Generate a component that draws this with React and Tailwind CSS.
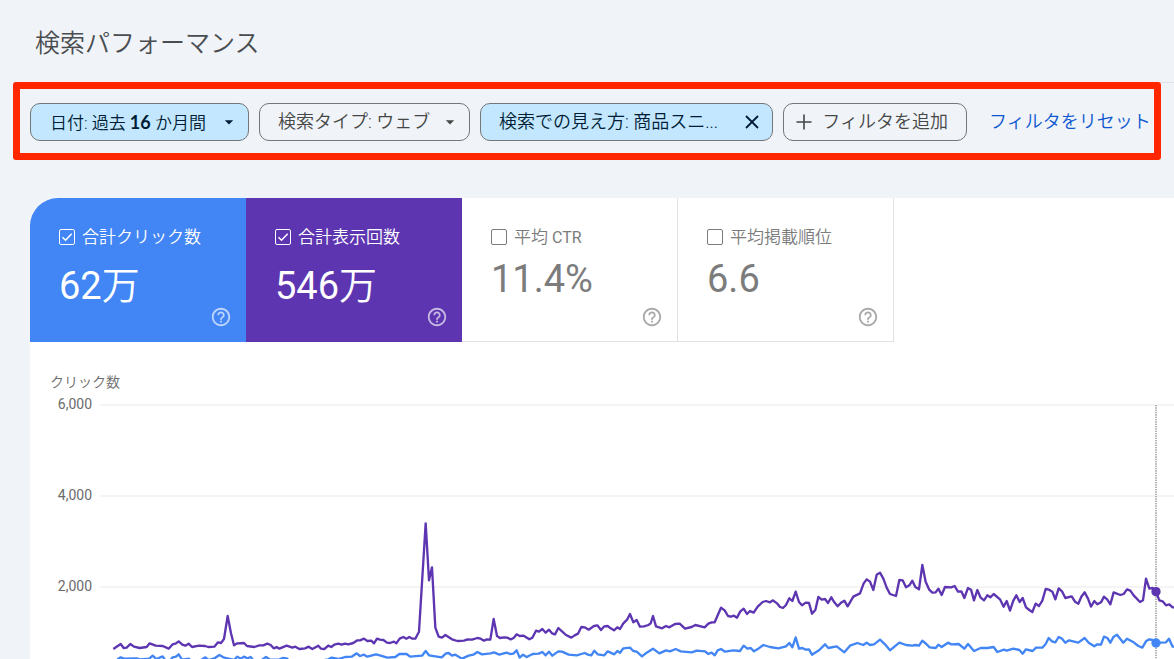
import { MdArrowDropDown, MdHelpOutline } from "react-icons/md";

const METRICS = [
  { id: "clicks", label: "合計クリック数", value: "62万", checked: true, tone: "bg-[#4285f4] text-white rounded-tl-[28px]" },
  { id: "impressions", label: "合計表示回数", value: "546万", checked: true, tone: "bg-[#5e35b1] text-white" },
  { id: "ctr", label: "平均", suffix: "CTR", value: "11.4%", checked: false, tone: "bg-white text-[#7c7c7c] border-r border-b border-[#e2e2e4]" },
  { id: "position", label: "平均掲載順位", value: "6.6", checked: false, tone: "bg-white text-[#7c7c7c] border-r border-b border-[#e2e2e4]" },
];

// Each series is stored in four spans; a span has its start on the time axis and its points.
const IMPRESSIONS = [
  [0, "40,447 62,432 71,444 80,443 91,432 102,440 119,444 140,441 149,430 167,437 188,438 206,446 218,433 228,430 236,424 247,434 256,437 266,431 276,441 297,437 315,438 325,441 343,440 354,427 363,429 372,417 383,348 393,400 402,436 412,430 432,429 441,438 463,441 478,436 490,436 502,431 512,435 521,445 530,441 538,446 560,437 577,443 586,440 598,447 615,445 626,440 637,447 655,437 663,446 673,447 685,437 694,441 703,434 715,431 725,434 735,431 745,433 760,429 772,421"],
  [780, "0,421 12,416 22,423 34,422 42,430 51,416 60,419 70,420 81,428 90,429 102,425 109,430 119,416 130,411 139,416 148,411 157,416 166,416 177,395 197,70 207,241 216,202 226,383 236,410 246,413 256,405 276,418 292,423 312,422 323,418 336,419 352,414 362,416 372,422 381,418 391,419 401,357 411,408 420,414 432,412 442,413 452,418 461,414 470,403 479,408 491,407 508,418 517,413 528,392 537,395 547,387 557,398 567,389 576,400 585,403 595,384 606,394 618,405 634,413 644,406 654,401 664,381 674,382 686,389 702,378 712,376 723,390 733,379 743,378 752,385 762,391 772,382"],
  [1560, "0,387 10,370 22,358 30,342 40,367 50,360 60,380 72,379 85,375 92,370 99,348 108,379 126,385 138,378 148,382 165,372 179,371 195,386 215,381 226,375 254,382 265,371 275,367 284,367 303,323 314,331 324,348 333,350 342,347 351,353 361,334 371,326 381,342 390,333 401,338 413,320 428,306 438,303 450,307 459,301 471,310 480,321 489,324 498,315 508,295 517,303 527,275 537,306 546,316 557,308 567,309 576,341 586,330 595,291 605,299 615,297 624,309 634,292 643,307 653,319 663,308 673,302 683,319 700,290 720,280 731,250 740,238 750,245 760,270 770,224 780,218 790,236 800,263"],
  [2370, "0,282 18,288 28,240 38,241 48,262 58,256 67,242 76,261 87,268 97,195 107,245 117,268 127,278 137,277 145,266 155,285 165,261 184,262 194,258 204,275 214,274 223,294 234,264 243,269 252,301 262,270 272,293 282,301 292,286 301,292 311,282 330,298 341,320 350,303 360,332 370,302 379,286 389,306 398,294 408,322 418,330 427,336 437,311 447,318 457,302 467,267 477,269 487,275 496,298 506,265 516,274 526,294 545,289 555,305 565,311 574,290 584,277 594,296 603,320 613,303 622,313 633,307 642,290 652,299 661,313 671,277 691,285 701,282 711,268 721,272 731,286 750,306 759,301 768,236 778,266 788,264 798,275 808,301 818,304 828,316 838,313 848,322 858,322"],
];

const CLICKS = [
  [0, "40,490 54,477 62,472 72,476 110,475 120,478 148,476 158,467 169,477 188,469 198,484 208,484 218,472 228,470 236,463 246,479 266,476 276,484 300,482 316,472 325,480 345,474 358,465 370,472 382,475 402,480 412,470 422,476 432,470 442,475 452,471 462,483 485,480 498,471 510,479 538,479 548,474 560,475 570,484 640,486 685,478 695,473 715,477 735,471 755,470 770,460"],
  [780, "0,468 12,464 22,470 48,463 62,467 82,473 106,471 118,462 140,462 150,470 186,467 197,453 207,466 245,472 258,460 266,459 276,467 286,464 306,476 326,467 340,464 352,456 366,463 392,460 402,457 418,464 440,458 450,462 460,461 470,451 479,473 489,464 500,471 518,462 536,461 547,456 557,466 567,455 577,467 595,454 606,455 626,464 650,466 664,462 674,459 684,464 694,466 703,452 713,463 733,466 743,454 763,463 772,453"],
  [1560, "0,458 10,445 30,443 40,453 50,455 66,469 80,458 99,446 118,460 138,451 150,454 167,447 182,454 215,457 230,452 255,454 265,462 275,458 284,466 293,451 303,447 315,455 340,451 360,453 371,437 382,446 392,444 402,454 412,448 430,435 450,441 475,445 498,439 508,429 517,442 527,412 537,446 547,444 557,449 567,448 576,464 598,450 615,433 625,444 650,439 673,457 690,437 712,429 730,435 740,428 750,435 762,433 780,419 795,433"],
  [2370, "0,451 28,428 48,435 67,437 76,435 87,437 97,422 109,432 119,442 137,444 145,434 155,441 174,428 184,433 206,432 223,446 234,432 252,453 272,444 292,444 311,441 322,456 342,449 350,452 370,446 388,450 398,461 408,448 428,453 438,443 457,443 467,432 476,414 486,424 496,427 506,411 516,416 526,428 537,421 565,428 584,414 596,428 613,439 622,433 633,434 642,410 652,414 661,428 671,410 681,404 700,428 711,416 731,427 745,438 757,443 768,424 778,418 788,420 798,429 808,428 828,427 837,416 848,440 858,440"],
];

function toPoints(spans) {
  return spans
    .flatMap(([start, pts]) =>
      pts.split(" ").map((p) => {
        const [x, y] = p.split(",").map(Number);
        return `${start + x},${y + 312}`;
      }),
    )
    .join(" ");
}

function Chip({ active, className, children }) {
  const tone = active ? "bg-[#c2e7ff] text-[#001d35]" : "text-[#444746]";
  return (
    <button
      type="button"
      className={`flex h-[38px] shrink-0 items-center justify-between rounded-[10px] border border-[#747775] leading-6 font-[350] whitespace-nowrap ${tone} ${className}`}
    >
      {children}
    </button>
  );
}

function Metric({ metric }) {
  const { id, label, suffix, value, checked, tone } = metric;
  return (
    <div className={`flex h-36 w-[216px] flex-col pt-7 pr-[14px] pl-[29px] ${tone}`}>
      <div className="flex h-[22px] items-center gap-[7px]">
        <span className="grid shrink-0">
          <input
            id={id}
            type="checkbox"
            defaultChecked={checked}
            className="col-start-1 row-start-1 size-4 appearance-none rounded-[2px] border border-current"
          />
          {checked && (
            <svg viewBox="0 0 16 16" className="pointer-events-none col-start-1 row-start-1 size-4" fill="none" stroke="currentColor" strokeWidth="1.5" aria-hidden="true">
              <path d="M3.5 8.2 6.5 11.2 12.7 4.8" />
            </svg>
          )}
        </span>
        <label htmlFor={id} className="text-[17px] leading-5 font-[350] whitespace-nowrap">
          {label}
          {suffix && <span className="text-[16px] font-normal"> {suffix}</span>}
        </label>
      </div>
      <div className={`h-[58px] text-[38px] leading-[50px] font-[350] ${checked ? "pt-[13px]" : "pt-[6px]"}`}>
        <Value text={value} />
      </div>
      <button type="button" aria-label={`${label}${suffix ?? ""}のヘルプ`} className="self-end opacity-65">
        <MdHelpOutline className="size-[22px]" />
      </button>
    </div>
  );
}

function Value({ text }) {
  const digits = text.replace("万", "");
  return (
    <>
      <span className="font-normal">{digits}</span>
      {text.endsWith("万") && "万"}
    </>
  );
}

function Chart() {
  return (
    <section className="pt-[30px] text-[14px] text-[#6b6b6b]">
      <h2 className="pl-5 leading-5 font-[350]">クリック数</h2>
      <div className="mt-1 flex">
        <div className="flex w-[62px] shrink-0 flex-col items-end gap-[75px] leading-4">
          <span>6,000</span>
          <span>4,000</span>
          <span>2,000</span>
        </div>
        <svg viewBox="0 0 3222 789" preserveAspectRatio="none" className="ml-2 h-[263px] min-w-0 flex-1" fill="none" role="img" aria-label="クリック数と表示回数の推移">
          <path d="M0 27H3222M0 300H3222M0 573H3222" stroke="#f1f1f1" strokeWidth="4" />
          <path d="M3168 27V789" stroke="#8a8a8a" strokeWidth="4" strokeDasharray="4 3" />
          <polyline points={toPoints(CLICKS)} stroke="#4285f4" strokeWidth="7" strokeLinejoin="round" />
          <polyline points={toPoints(IMPRESSIONS)} stroke="#5e35b1" strokeWidth="7" strokeLinejoin="round" />
          <circle cx="3168" cy="587" r="14" fill="#5e35b1" />
          <circle cx="3168" cy="741" r="14" fill="#4285f4" />
        </svg>
      </div>
    </section>
  );
}

export default function App() {
  return (
    <div className="min-h-screen overflow-x-hidden bg-[#f0f3f8] font-['Roboto','Noto_Sans_CJK_JP',sans-serif]">
      <header className="ml-[30px] flex h-[83px] items-center border-b border-[#dfe2e6] pt-[5px] pl-[5px]">
        <h1 className="text-[25px] font-[350] text-[#4a4d50]">検索パフォーマンス</h1>
      </header>
      <div className="relative mx-[13px] -mt-px flex items-center gap-[10px] rounded-[3px] border-[7px] border-[#ff2600] bg-[#f0f3f8] pt-[14px] pb-3 pl-[10px]">
        <Chip active className="w-[219px] pr-[9px] pl-[19px] text-[17px]">
          <span>
            日付: 過去 <span className="font-['Lato'] text-[18px] font-bold">16</span> か月間
          </span>
          <MdArrowDropDown className="size-5" />
        </Chip>
        <Chip className="w-[211px] pr-[9px] pl-[18px] text-[18px]">
          <span>検索タイプ: ウェブ</span>
          <MdArrowDropDown className="size-5" />
        </Chip>
        <Chip active className="w-[293px] pr-3 pl-[18px] text-[18px]">
          <span>検索での見え方: 商品スニ...</span>
          <svg viewBox="0 0 16 16" className="size-4" fill="none" stroke="currentColor" strokeWidth="1.8" aria-hidden="true">
            <path d="M2 2 14 14M14 2 2 14" />
          </svg>
        </Chip>
        <Chip className="w-[184px] pr-[18px] pl-3 text-[18px]">
          <svg viewBox="0 0 16 16" className="size-4" fill="none" stroke="currentColor" strokeWidth="1.6" aria-hidden="true">
            <path d="M8 0.5V15.5M0.5 8H15.5" />
          </svg>
          <span>フィルタを追加</span>
        </Chip>
        <a href="#reset" className="ml-3 text-[18px] leading-6 font-[350] whitespace-nowrap text-[#0b57d0]">フィルタをリセット</a>
      </div>
      <main className="mt-[38px] ml-[30px] rounded-tl-[28px] bg-white">
        <div className="flex">
          {METRICS.map((m) => (
            <Metric key={m.id} metric={m} />
          ))}
        </div>
        <Chart />
      </main>
    </div>
  );
}
